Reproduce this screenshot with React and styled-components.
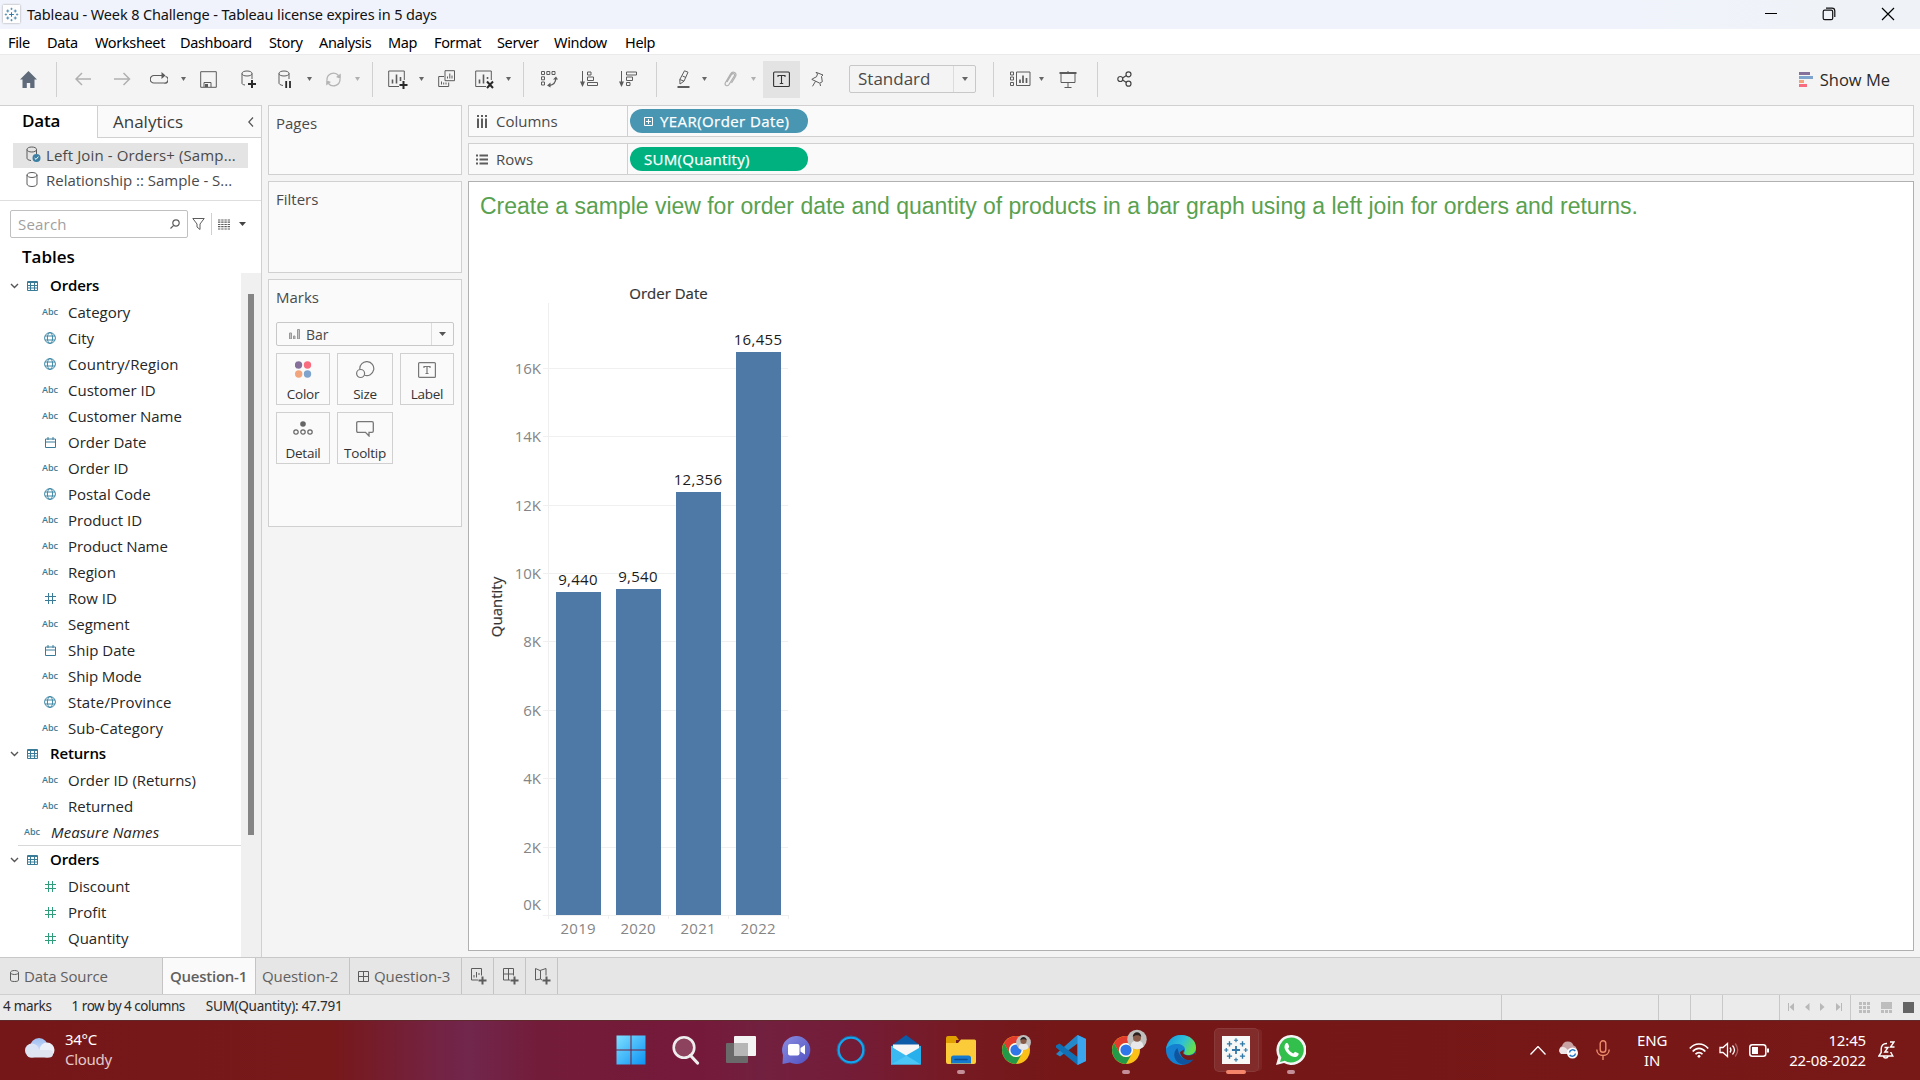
import React from 'react';
import styled, { createGlobalStyle } from 'styled-components';

const UI = '"Open Sans", "Noto Sans", sans-serif';
const SYS = '"Noto Sans", "Open Sans", sans-serif';

const GlobalStyle = createGlobalStyle`
  * { box-sizing: border-box; }
  body { margin: 0; background: #f4f4f4; font-family: ${UI}; overflow: hidden; }
  svg { display: block; flex: none; }
`;

const Window = styled.div`
  width: 1920px;
  height: 1080px;
  display: flex;
  flex-direction: column;
  background: #f4f4f4;
  color: #333;
  white-space: nowrap;
`;

/* ---------- title bar + menu ---------- */
const TitleBar = styled.header`
  height: 29px;
  flex: none;
  display: flex;
  align-items: center;
  padding: 0 0 1px 3px;
  background: linear-gradient(90deg, #f0f3fb 85%, #eff3f8 95%);
  color: #111;
  font: 14.5px/20px ${SYS};
  letter-spacing: -0.14px;
`;
const AppBadge = styled.span`
  width: 17px;
  height: 18px;
  margin-right: 7px;
  display: grid;
  place-items: center;
  background: #fdfdfd;
  box-shadow: 0 0 2px #999;
`;
const WindowControls = styled.div`
  margin-left: auto;
  display: flex;
  gap: 45px;
  padding-right: 25px;
`;
const MenuBar = styled.nav`
  height: 25px;
  flex: none;
  display: flex;
  align-items: center;
  padding: 1px 0 0 8px;
  background: #fff;
  color: #000;
  font: 14.5px/22px ${SYS};
  letter-spacing: -0.35px;
`;
const MenuItem = styled.span`
  width: ${(p) => p.$w}px;
`;

/* ---------- toolbar ---------- */
const Toolbar = styled.div`
  height: 51px;
  flex: none;
  display: flex;
  align-items: center;
  padding-bottom: 2px;
  border-top: 1px solid #eaeaea;
`;
const Tool = styled.span`
  width: ${(p) => p.$w}px;
  margin-left: ${(p) => p.$gap}px;
  height: 37px;
  flex: none;
  display: flex;
  align-items: center;
  justify-content: center;
  background: ${(p) => (p.$active ? '#e3e3e3' : 'transparent')};
`;
const Separator = styled.span`
  width: 1px;
  height: 35px;
  margin-left: ${(p) => p.$gap}px;
  background: #d0d0d0;
`;
const FitSelect = styled.div`
  width: 127px;
  height: 28px;
  margin-left: 24px;
  display: flex;
  align-items: center;
  border: 1px solid #c8c8c8;
  border-radius: 2px;
  padding-left: 8px;
  font-size: 17px;
  line-height: 22px;
  color: #4a4a4a;
`;
const SelectArrow = styled.span`
  width: ${(p) => p.$w}px;
  height: 100%;
  margin-left: auto;
  border-left: 1px solid #dcdcdc;
  display: grid;
  place-items: center;
`;
const ShowMe = styled.div`
  margin-left: auto;
  padding-right: 30px;
  display: flex;
  align-items: center;
  gap: 7px;
  color: #2a2a2a;
  font-size: 16.5px;
`;

/* ---------- body ---------- */
const Body = styled.main`
  height: 852px;
  flex: none;
  display: flex;
  gap: 6px;
`;
const SidePane = styled.aside`
  width: 262px;
  flex: none;
  display: flex;
  flex-direction: column;
  background: #fff;
  border-right: 1px solid #d0d0d0;
`;
const PaneTabs = styled.div`
  height: 33px;
  display: flex;
  flex: none;
  border-top: 1px solid #d0d0d0;
`;
const DataTab = styled.div`
  width: 97px;
  padding-left: 22px;
  font: 600 17px/30px ${UI};
  letter-spacing: -0.2px;
  color: #000;
`;
const AnalyticsTab = styled.div`
  flex: 1;
  display: flex;
  align-items: center;
  justify-content: space-between;
  padding: 0 7px 0 15px;
  background: #fafafa;
  border-left: 1px solid #d0d0d0;
  border-bottom: 1px solid #d0d0d0;
  font-size: 17px;
  color: #3a3a3a;
`;
const Sources = styled.div`
  height: 63px;
  flex: none;
  padding: 5px 13px 0 13px;
  border-bottom: 1px solid #dedede;
`;
const Source = styled.div`
  height: 25px;
  display: flex;
  align-items: center;
  gap: 4px;
  padding: 0 0 2px 13px;
  background: ${(p) => (p.$selected ? '#e4e4e4' : 'transparent')};
  font-size: 15px;
  letter-spacing: ${(p) => (p.$selected ? 0.13 : -0.02)}px;
  color: #4a4a4a;
`;
const SearchRow = styled.div`
  height: 46px;
  flex: none;
  display: flex;
  align-items: center;
  padding-left: 10px;
`;
const SearchBox = styled.div`
  width: 178px;
  height: 28px;
  display: flex;
  align-items: center;
  justify-content: space-between;
  padding: 0 7px 1px;
  margin-right: 4px;
  border: 1px solid #c0c0c0;
  border-radius: 2px;
  font-size: 15px;
  letter-spacing: 0.2px;
  color: #a0a0a0;
`;
const SearchDivider = styled.span`
  width: 1px;
  height: 22px;
  margin: 0 6px;
  background: #d0d0d0;
`;
const CaretBox = styled.span`
  margin-left: 9px;
`;
const TablesHeading = styled.h2`
  height: 26px;
  flex: none;
  margin: 0;
  padding-left: 22px;
  font: 600 17px/20px ${UI};
  color: #000;
`;
const TreeArea = styled.div`
  flex: 1;
  display: flex;
  min-height: 0;
`;
const Tree = styled.div`
  width: 241px;
  overflow: hidden;
`;
const ScrollTrack = styled.div`
  flex: 1;
  padding: 21px 0 0 7px;
  background: #f0f0f0;
`;
const ScrollThumb = styled.div`
  width: 6px;
  height: 541px;
  background: #858585;
`;
const TableRow = styled.div`
  height: ${(p) => p.$h || 26}px;
  display: flex;
  align-items: center;
  gap: 8px;
  padding-left: 10px;
  color: #000;
  font-size: 15px;
  font-weight: 600;
  letter-spacing: -0.15px;
`;
const TableName = styled.span`
  margin-left: 4px;
  padding-bottom: 2px;
`;
const FieldRow = styled.div`
  height: 26px;
  display: flex;
  align-items: center;
  padding-left: ${(p) => (p.$outer ? 22 : 40)}px;
  font-size: 15px;
  color: #262626;
  font-style: ${(p) => (p.$outer ? 'italic' : 'normal')};
  letter-spacing: ${(p) => p.$ls || 0}px;
`;
const FieldIcon = styled.span`
  width: 20px;
  margin-right: ${(p) => (p.$outer ? 9 : 8)}px;
  display: flex;
  justify-content: center;
  font: 600 9px/12px ${UI};
  letter-spacing: 0;
  color: #3a7c98;
`;
const TreeDivider = styled.div`
  height: 1px;
  margin: 0 0 0 18px;
  background: #d8d8d8;
`;

const CardColumn = styled.div`
  width: 194px;
  flex: none;
  display: flex;
  flex-direction: column;
  gap: 6px;
`;
const Card = styled.section`
  height: ${(p) => p.$h}px;
  padding: 6px 7px;
  background: #fafafa;
  border: 1px solid #d0d0d0;
`;
const CardTitle = styled.div`
  font: 15px/22px ${UI};
  color: #4a4a4a;
`;
const MarkSelect = styled.div`
  height: 24px;
  margin-top: 14px;
  display: flex;
  align-items: center;
  padding-left: 12px;
  gap: 6px;
  border: 1px solid #c8c8c8;
  border-radius: 2px;
  font-size: 14px;
  color: #4a4a4a;
`;
const MarkGrid = styled.div`
  display: grid;
  grid-template-columns: 54px 56px 54px;
  grid-auto-rows: 52px;
  gap: 7px;
  margin-top: 7px;
`;
const MarkButton = styled.div`
  border: 1px solid #d0d0d0;
  display: flex;
  flex-direction: column;
  align-items: center;
  font: 13.5px/18px ${UI};
  letter-spacing: -0.25px;
  color: #333;
`;
const MarkIcon = styled.span`
  height: 31px;
  display: grid;
  place-items: center;
`;

const Canvas = styled.div`
  width: 1446px;
  flex: none;
  display: flex;
  flex-direction: column;
  gap: 6px;
`;
const Shelf = styled.div`
  height: 32px;
  flex: none;
  display: flex;
  border: 1px solid #d0d0d0;
  background: #fafafa;
`;
const ShelfLabel = styled.div`
  width: 159px;
  display: flex;
  align-items: center;
  gap: 8px;
  padding-left: 7px;
  border-right: 1px solid #d0d0d0;
  font-size: 15px;
  color: #4a4a4a;
`;
const Pill = styled.div`
  width: 178px;
  height: 24px;
  margin: 3px 0 0 2px;
  padding-left: 14px;
  display: flex;
  align-items: center;
  gap: 7px;
  border-radius: 12px;
  background: ${(p) => p.$color};
  color: #fff;
  font: 15px/24px ${UI};
  -webkit-text-stroke: 0.25px #fff;
  letter-spacing: ${(p) => p.$ls}px;
`;
const View = styled.section`
  flex: none;
  height: 770px;
  border: 1px solid #b0b0b0;
  background: #fff;
  padding: 10px 11px;
`;
const ViewTitle = styled.h1`
  margin: 0;
  height: 90px;
  font: 23px/28px "Liberation Sans", Arial, sans-serif;
  letter-spacing: -0.015px;
  color: #59a14f;
`;

/* ---------- bottom tabs + status ---------- */
const SheetBar = styled.div`
  height: 38px;
  flex: none;
  display: flex;
  background: #e6e6e6;
  border-top: 1px solid #c8c8c8;
  border-bottom: 1px solid #cfcfcf;
`;
const SheetTab = styled.div`
  width: ${(p) => p.$w}px;
  display: flex;
  align-items: center;
  gap: 5px;
  padding-left: ${(p) => p.$pad}px;
  border-right: 1px solid #c4c4c4;
  background: ${(p) => (p.$active ? '#fafafa' : 'transparent')};
  font-weight: ${(p) => (p.$active ? 600 : 400)};
  font-size: 15px;
  letter-spacing: ${(p) => (p.$active ? -0.25 : -0.1)}px;
  color: #606060;
`;
const StatusBar = styled.div`
  height: 25px;
  flex: none;
  display: flex;
  align-items: center;
  background: #ebebeb;
  color: #2a2a2a;
  font: 13.5px/23px ${SYS};
`;
const StatusText = styled.span`
  margin-left: ${(p) => p.$gap}px;
  padding-bottom: 2px;
  letter-spacing: ${(p) => p.$ls}px;
`;
const StatusCells = styled.div`
  height: 100%;
  margin-left: auto;
  display: flex;
`;
const StatusCell = styled.div`
  width: ${(p) => p.$w}px;
  border-left: 1px solid #c8c8c8;
  display: flex;
  align-items: center;
  justify-content: space-between;
  padding: 0 ${(p) => p.$right || 0}px 1px ${(p) => p.$left || 0}px;
`;

/* ---------- taskbar ---------- */
const Taskbar = styled.footer`
  height: 60px;
  flex: none;
  display: flex;
  border-top: 1px solid #5e2a2c;
  color: #fff;
  font: 15px/20px ${SYS};
  background: linear-gradient(90deg, #751719 0, #771819 330px, #732344 440px, #71264c 470px, #731c39 540px,
    #75193a 700px, #72203f 760px, #741c36 860px, #761a22 960px, #751717 1060px, #781817 100%);
`;
const Weather = styled.div`
  width: 603px;
  padding: 8px 0 0 24px;
  display: flex;
  gap: 10px;
`;
const WeatherText = styled.div`
  color: ${(p) => (p.$dim ? '#e3c8c8' : '#fff')};
  letter-spacing: -0.3px;
`;
const Apps = styled.div`
  width: 716px;
  display: flex;
`;
const AppSlot = styled.div`
  width: 55.05px;
  height: 59px;
  padding-top: 7px;
  display: flex;
  flex-direction: column;
  align-items: center;
`;
const AppTile = styled.div`
  width: 45px;
  height: 44px;
  display: grid;
  place-items: center;
  border-radius: 5px;
  background: ${(p) => (p.$active ? 'rgba(255,255,255,.09)' : 'transparent')};
  box-shadow: ${(p) => (p.$active ? 'inset 0 0 0 1px rgba(255,255,255,.07), 4px 0 0 -1px rgba(255,255,255,.06)' : 'none')};
`;
const RunMark = styled.span`
  width: ${(p) => (p.$active ? 20 : 8)}px;
  height: 4px;
  margin-top: -2px;
  border-radius: 2px;
  background: ${(p) => (p.$active ? '#f4846a' : '#c48f98')};
`;
const Tray = styled.div`
  flex: 1;
  display: flex;
  align-items: center;
  justify-content: flex-end;
  padding: 0 25px 1px 0;
`;
const TrayItem = styled.span`
  margin-right: ${(p) => p.$mr}px;
`;
const TrayText = styled.div`
  margin-right: ${(p) => p.$mr}px;
  text-align: ${(p) => p.$align};
  letter-spacing: -0.15px;
  padding-bottom: 1px;
`;

/* ---------- icons ---------- */
const G = '#5c5c5c';
const Svg = ({ w = 16, h = w, children, c = G, sw = 1 }) => (
  <svg width={w} height={h} viewBox={`0 0 ${w} ${h}`} fill="none" stroke={c} strokeWidth={sw}>{children}</svg>
);
const Caret = ({ c = '#666', w = 6 }) => (
  <Svg w={w} h={4} c="none"><path d={`M0 0H${w}L${w / 2} 4Z`} fill={c} /></Svg>
);
const Cyl = 'M.5 3v9c0 1.400 2.200 2.500 5 2.500s5-1.100 5-2.500V3M.5 3c0-1.400 2.200-2.500 5-2.500s5 1.100 5 2.500-2.200 2.500-5 2.500S.5 4.400.5 3';
const SmallCylinder = () => (
  <Svg w={9} h={13}><path d="M.5 2.500v7.500c0 1 1.500 1.500 4 1.500s4-.5 4-1.500V2.500M.5 2.500c0-1 1.500-2 4-2s4 1 4 2-1.500 2-4 2-4-1-4-2" /></Svg>
);
const Snowflake = ({ size = 16, c = '#2f78a8' }) => {
  const crosses = [[16, 16, 5, 2.2], [8, 8.5, 3.2, 1.7], [24, 8.5, 3.2, 1.7], [8, 23.5, 3.2, 1.7], [24, 23.5, 3.2, 1.7],
    [16, 4, 2.5, 1.4], [16, 28, 2.5, 1.4], [4, 16, 2.5, 1.4], [28, 16, 2.5, 1.4]];
  return (
    <svg width={size} height={size} viewBox="0 0 32 32" fill="none" stroke={c}>
      {crosses.map(([x, y, r, w], i) => <path key={i} strokeWidth={w} d={`M${x - r} ${y}h${2 * r}M${x} ${y - r}v${2 * r}`} />)}
    </svg>
  );
};
const TreeTable = () => (
  <Svg w={11} h={10} c="#3a7c98"><path d="M.5.5h10v9H.5zM0 1.500h11M0 4.500h11M0 7h11M3.500 2v8M7.500 2v8" /></Svg>
);
const Chevron = () => <Svg w={9} h={6} c="#555" sw={1.4}><path d="m1 1 3.500 3.500L8 1" /></Svg>;

const Globe = () => (
  <Svg w={12} c="#3f88a6"><circle cx="6" cy="6" r="5.400" /><ellipse cx="6" cy="6" rx="2.600" ry="5.400" /><path d="M1 4h10M1 8h10" /></Svg>
);
const Calendar = () => (
  <Svg w={11} c="#3a7c98"><path d="M.5 2h10v8.500H.5zM.5 5h10M3 0v3M8 0v3" /></Svg>
);
const Hash = ({ c }) => <Svg w={11} c={c}><path d="M3.500 0v11M7.500 0v11M0 3.500h11M0 7.500h11" /></Svg>;
const fieldIcons = {
  abc: 'Abc',
  geo: <Globe />,
  date: <Calendar />,
  num: <Hash c="#3a7c98" />,
  measure: <Hash c="#2f9c7a" />,
};

const Rot = 'M2 9a6.500 6.500 0 0 1 11.500-4.500M15 8a6.500 6.500 0 0 1-11.500 4.500';
const icons = {
  home: <Svg w={17} h={17} c="none"><path d="M8.500 0 17 8.500h-2.500V17H10.200v-5H6.800v5H2.500V8.500H0Z" fill="#5f6b7a" /></Svg>,
  back: <Svg w={17} h={14} c="#b0b0b0" sw={1.5}><path d="M16 7H1M7 1 1 7l6 6" /></Svg>,
  forward: <Svg w={17} h={14} c="#b0b0b0" sw={1.5}><path d="M0 7h15.500M9.500 1l6 6-6 6" /></Svg>,
  replay: <Svg w={18} h={14} sw={1.2}><path d="M13 3.500H4a3.300 3.300 0 0 0 0 7.500h10a3.300 3.300 0 0 0 1.500-6.500" /><path d="m11.500 0 4 3.500-4 3.500Z" fill={G} stroke="none" /></Svg>,
  save: <Svg w={17}><path d="M.7.7h15.600v15.600H.7zM4 16v-4.500h7V16" /><path d="M5 13h3v3H5z" fill={G} stroke="none" /></Svg>,
  addSource: <Svg w={16} h={18}><path d="M5 15C2 14.500 2 13.800 2 13V3.500M2 3.500C2 2 4 1 7 1s5 1 5 2.500S10 6 7 6 2 5 2 3.500ZM12 3.500V9" /><path d="M12 10v8M8 14h8" stroke="#2a2a2a" strokeWidth="2" /></Svg>,
  pause: <Svg w={14} h={18}><path d="M5 15.500C2 15 1 14 1 13V3.500M1 3.500C1 2 3 1 6 1s5 1 5 2.500S9 6 6 6 1 5 1 3.500ZM11 3.500V9" /><path d="M8.200 11v7M12 11v7" stroke="#2a2a2a" strokeWidth="1.800" /></Svg>,
  refresh: <Svg w={17} c="#b4b4b4" sw={1.3}><path d={Rot} /><path d="M15.800 2.500V8L11 6ZM1.200 14.500V9L6 11Z" fill="#b4b4b4" stroke="none" /></Svg>,
  newSheet: <Svg w={20} h={19}><path d="M11 16.500H.7V1h15.600v9" /><path d="M4.500 13.500v-4M8.500 13.500v-9M12.500 11V7" strokeWidth="1.600" /><path d="M15.500 11v8M11.500 15h8" stroke="#2a2a2a" strokeWidth="2" /></Svg>,
  duplicate: <Svg w={18} h={18}><path d="M7 .7h9.500v10H7zM6 6.500H.7v10h10v-4" /><path d="M9.500 8.500v-2M11.800 8.500v-5M14 8.500v-3M3.500 14.500v-3M5.700 14.500v-2M8 14.500v-2" /></Svg>,
  clear: <Svg w={20} h={19}><path d="M11 16.500H.7V1h15.600v9" /><path d="M4.500 13.500v-4M8.500 13.500v-9M12.500 9V7" strokeWidth="1.600" /><path d="m12 11.500 6 6.500m0-6.500-6 6.500" stroke="#2a2a2a" strokeWidth="2" /></Svg>,
  swap: (
    <Svg w={17} h={18}>
      <path d="M.5 1.500h3v3h-3zM5.800 1.500h3v3h-3zM11 1.500h3v3h-3zM.5 6.800h3v3h-3zM.5 12h3v3h-3z" />
      <path d="M14.800 8c0 4-2.500 7-6.800 7.500" strokeWidth="1.300" />
      <path d="m12 9.500 3-3 2 3ZM9.500 12.500v5L6 15.500Z" fill={G} stroke="none" />
    </Svg>
  ),
  sortAsc: <Svg w={18} h={16}><path d="M2.500 0v14M7.500 1h3.500v3H7.500zM7.500 6h6v3.500h-6zM7.500 11.500h10v3h-10z" /><path d="M0 10.500h5L2.500 16Z" fill={G} stroke="none" /></Svg>,
  sortDesc: <Svg w={18} h={16}><path d="M2.500 0v14M7.500 1h10v3h-10zM7.500 6h6v3.500h-6zM7.500 11.500H11v3H7.500z" /><path d="M0 10.500h5L2.500 16Z" fill={G} stroke="none" /></Svg>,
  highlight: <Svg w={13} h={18}><path d="m7.500.8 3.500 1.400-4 9L3 14l-.2-4.500ZM2.800 9.500l4.200 1.700M5.500 6l3.500 1.500" /><path d="M.5 17h12" strokeWidth="2" /></Svg>,
  clip: <Svg w={14} h={17} c="#b0b0b0" sw={1.2}><path d="M4 11 8.500 3.500c1.500-1.800 3.800-.5 2.800 1.500L6 13.500c-1.800 2.500-4.800.7-3.600-1.800L7.500 3C9.700-.7 14.500 1.800 12.500 5.500L8.500 12" /></Svg>,
  label: <Svg w={17} h={17} c="#333" sw={1.1}><rect x=".6" y="1" width="15.800" height="14.500" rx="1" /><path d="M5 6V4.500h7V6M8.500 4.500v8M6.800 12.500h3.400" /></Svg>,
  pin: <Svg w={14} h={17}><path d="M5 1.300 12 4l-1.500 1.400.8 5.300-2.500 1.500-8-3.800L3 7l2.500-1.200 1-2.800ZM4.500 10.300l-3 5M9 12.500l.5 2.500" /></Svg>,
  cards: <Svg w={21} h={16}><path d="M.5 1h3v3h-3zM.5 6h3v3h-3zM.5 11.500h3v3h-3zM6.500 1h13.500v13.500H6.500z" /><path d="M10 12V8.500M13 12V4.500M16.500 12V7" strokeWidth="1.700" /></Svg>,
  present: <Svg w={18} h={17}><path d="M2 3v8.500h14V3M9 11.500V16M5.500 16.500h7M9 0v1" /><path d="M.5 2h17" strokeWidth="2" /></Svg>,
  share: <Svg w={15} h={16} c="#444" sw={1.2}><circle cx="3.300" cy="8" r="2.500" /><circle cx="11.500" cy="3.300" r="2.500" /><circle cx="11.500" cy="12.700" r="2.500" /><path d="m5.500 7 4-2.500M5.500 9l4 2.500" /></Svg>,
};

const toolbarItems = [
  ['home', 20, 17], ['|', 19], ['back', 18, 17], ['forward', 22, 17], ['replay', 19, 18], ['v', 12], ['save', 14, 17],
  ['addSource', 23, 16], ['pause', 22, 14], ['v', 14], ['refresh', 12, 18], ['v-', 12], ['|', 12], ['newSheet', 15, 20],
  ['v', 10], ['duplicate', 14, 18], ['clear', 19, 20], ['v', 10], ['|', 12], ['swap', 17, 17], ['sortAsc', 22, 18],
  ['sortDesc', 21, 18], ['|', 19], ['highlight', 20, 12], ['v', 12], ['clip', 16, 13], ['v-', 14],
  ['label', 7, 37, true], ['pin', 11, 14], ['fit'], ['|', 17], ['cards', 16, 20], ['v', 8], ['present', 15, 18],
  ['|', 20], ['share', 19, 15],
];

const AppToolbar = () => (
  <Toolbar>
    {toolbarItems.map(([kind, gap, w, active], i) => {
      if (kind === '|') return <Separator key={i} $gap={gap} />;
      if (kind === 'v' || kind === 'v-') return <Tool key={i} $gap={gap} $w={6}><Caret w={5} c={kind === 'v' ? '#666' : '#b0b0b0'} /></Tool>;
      if (kind === 'fit') return <FitSelect key={i}>Standard<SelectArrow $w={22}><Caret /></SelectArrow></FitSelect>;
      return <Tool key={i} $gap={gap} $w={w} $active={active}>{icons[kind]}</Tool>;
    })}
    <ShowMe>
      <Svg w={14} h={15} c="none">
        <path d="M0 0h11v3H0z" fill="#85709b" /><path d="M0 4h14v3H0z" fill="#7ea3cc" />
        <path d="M0 8h5v3H0z" fill="#f2a57c" /><path d="M0 12h8v3H0z" fill="#f96c80" />
      </Svg>
      Show Me
    </ShowMe>
  </Toolbar>
);

/* ---------- data ---------- */
const menus = [['File', 39], ['Data', 48], ['Worksheet', 85], ['Dashboard', 89], ['Story', 50], ['Analysis', 69], ['Map', 46],
  ['Format', 63], ['Server', 57], ['Window', 71], ['Help', 40]];
const orderFields = [['abc', 'Category'], ['geo', 'City'], ['geo', 'Country/Region', 0.1], ['abc', 'Customer ID'], ['abc', 'Customer Name', -0.05],
  ['date', 'Order Date'], ['abc', 'Order ID'], ['geo', 'Postal Code'], ['abc', 'Product ID'], ['abc', 'Product Name', -0.1], ['abc', 'Region'],
  ['num', 'Row ID'], ['abc', 'Segment'], ['date', 'Ship Date'], ['abc', 'Ship Mode', -0.1], ['geo', 'State/Province', 0.15], ['abc', 'Sub-Category', 0.1]];
const returnFields = [['abc', 'Order ID (Returns)'], ['abc', 'Returned']];
const measures = [['measure', 'Discount'], ['measure', 'Profit'], ['measure', 'Quantity']];

const Fields = ({ items }) => items.map(([type, name, ls]) => (
  <FieldRow key={name} $ls={ls}><FieldIcon>{fieldIcons[type]}</FieldIcon>{name}</FieldRow>
));
const TableHead = ({ name, h }) => (
  <TableRow $h={h}><Chevron /><TreeTable /><TableName>{name}</TableName></TableRow>
);

const DataPane = () => (
  <SidePane>
    <PaneTabs>
      <DataTab>Data</DataTab>
      <AnalyticsTab>Analytics<Svg w={6} h={10} c="#555" sw={1.2}><path d="M5 .5.8 5 5 9.500" /></Svg></AnalyticsTab>
    </PaneTabs>
    <Sources>
      <Source $selected>
        <Svg w={16} h={17}>
          <path d="M5 14.500C2 14 1 13.500 1 12V3.500M1 3.500C1 2 3 1 5.800 1s4.700 1 4.700 2.500S8.500 6 5.800 6 1 5 1 3.500ZM10.500 3.500V8" />
          <circle cx="10.500" cy="12" r="4" fill="#3b80a4" stroke="none" /><path d="m8.600 12 1.400 1.400 2.400-2.800" stroke="#fff" />
        </Svg>
        Left Join - Orders+ (Samp...
      </Source>
      <Source><Svg w={16} h={15}><path d={Cyl} transform="translate(.5 0)" /></Svg>Relationship :: Sample - S...</Source>
    </Sources>
    <SearchRow>
      <SearchBox>Search<Svg w={10} sw={1.2}><circle cx="6" cy="4" r="3.200" /><path d="M3.700 6.300.5 9.500" /></Svg></SearchBox>
      <Svg w={13} h={12}><path d="M.8.5h11.400L8 6v5.500L5 9V6Z" /></Svg>
      <SearchDivider />
      <Svg w={12} h={11}><path d="M0 1h12M0 3.200h12M0 5.500h12M0 7.700h12M0 10h12" strokeDasharray="2.400 .8" strokeWidth="1.200" /></Svg>
      <CaretBox><Caret w={7} c="#444" /></CaretBox>
    </SearchRow>
    <TablesHeading>Tables</TablesHeading>
    <TreeArea>
      <Tree>
        <TableHead name="Orders" />
        <Fields items={orderFields} />
        <TableHead name="Returns" />
        <Fields items={returnFields} />
        <FieldRow $outer $ls={0.1}><FieldIcon $outer>Abc</FieldIcon>Measure Names</FieldRow>
        <TreeDivider />
        <TableHead name="Orders" h={27} />
        <Fields items={measures} />
      </Tree>
      <ScrollTrack><ScrollThumb /></ScrollTrack>
    </TreeArea>
  </SidePane>
);

const markButtons = [
  ['Color', <Svg w={17} c="none"><circle cx="3.500" cy="4" r="3.700" fill="#85709b" /><circle cx="12.500" cy="4" r="3.700" fill="#f96c80" /><circle cx="3.700" cy="13" r="3.700" fill="#f2a57c" /><circle cx="12.500" cy="13" r="3.700" fill="#7ea3cc" /></Svg>],
  ['Size', <Svg w={19} h={18} c="#777" sw={1.2}><path d="M3.800 8A7 7 0 1 1 8.500 14.200" /><circle cx="4.600" cy="12.500" r="4" /></Svg>],
  ['Label', <Svg w={18} h={16} c="#777" sw={1.2}><rect x=".6" y=".6" width="16.800" height="14.800" rx="1" /><path d="M6 6V4.500h6V6M9 4.500v7M7.500 11.500h3" /></Svg>],
  ['Detail', <Svg w={20} h={15} c="#666" sw={1.2}><circle cx="10" cy="3" r="2.800" fill="#666" stroke="none" /><circle cx="3" cy="11" r="2.200" /><circle cx="10" cy="11" r="2.200" /><circle cx="17" cy="11" r="2.200" /></Svg>],
  ['Tooltip', <Svg w={18} h={16} c="#777" sw={1.3}><path d="M2 .7h14q1.300 0 1.300 1.300v8q0 1.300-1.300 1.300h-3V15l-3.500-3.700H2Q.7 11.300.7 10V2Q.7.7 2 .7Z" /></Svg>],
];

const Cards = () => (
  <CardColumn>
    <Card $h={70}><CardTitle>Pages</CardTitle></Card>
    <Card $h={92}><CardTitle>Filters</CardTitle></Card>
    <Card $h={248}>
      <CardTitle>Marks</CardTitle>
      <MarkSelect>
        <Svg w={11} h={10} c="#999"><path d="M.5 4h2v6h-2zM4.500 7h1.500v3H4.500zM8.500 .5h2V10h-2z" fill="#c4c4c4" /></Svg>
        Bar
        <SelectArrow $w={22}><Caret w={7} c="#555" /></SelectArrow>
      </MarkSelect>
      <MarkGrid>
        {markButtons.map(([name, icon]) => <MarkButton key={name}><MarkIcon>{icon}</MarkIcon>{name}</MarkButton>)}
      </MarkGrid>
    </Card>
  </CardColumn>
);

/* ---------- chart ---------- */
const ticks = [0, 2, 4, 6, 8, 10, 12, 14, 16];
const bars = [[2019, 9440], [2020, 9540], [2021, 12356], [2022, 16455]];
const yOf = (v) => 633 - Math.round((v * 34.2) / 1000);
const ChartSvg = styled.svg`
  font: 15px ${UI};
`;
const Chart = () => (
  <ChartSvg width="320" height="660" viewBox="0 0 320 660">
    <text x="188.500" y="17" textAnchor="middle" fill="#333" stroke="#333" strokeWidth=".2">Order Date</text>
    <text transform="translate(22 325) rotate(-90)" textAnchor="middle" fill="#333" stroke="#333" strokeWidth=".2">Quantity</text>
    <path d="M68.500 21V637" stroke="#efefef" />
    {ticks.map((t) => {
      const y = yOf(t * 1000);
      return (
        <g key={t}>
          <path d={`M63 ${y + 0.5}H308`} stroke="#f0f0f0" />
          <text x="61" y={t === 0 ? y - 5 : y + 6} textAnchor="end" fill="#858585">{t}K</text>
        </g>
      );
    })}
    {[128.5, 188.5, 248.5, 308.5].map((x) => <path key={x} d={`M${x} 633V637`} stroke="#efefef" />)}
    {bars.map(([year, value], i) => {
      const x = 76 + i * 60;
      const y = yOf(value);
      return (
        <g key={year}>
          <rect x={x} y={y} width="45" height={633 - y} fill="#4e79a7" />
          <text x={x + 22} y={y - 7} textAnchor="middle" letterSpacing=".3" fill="#1c1c1c">{value.toLocaleString('en-US')}</text>
          <text x={x + 22.2} y="652" textAnchor="middle" letterSpacing=".3" fill="#858585">{year}</text>
        </g>
      );
    })}
  </ChartSvg>
);

const Worksheet = () => (
  <Canvas>
    <Shelf>
      <ShelfLabel><Svg w={12} h={13} c={G}><path d="M2 0v2M6 0v2M10 0v2M2 3.500V13M6 3.500V13M10 3.500V13" strokeWidth="2" /></Svg>Columns</ShelfLabel>
      <Pill $color="#4996b2" $ls={0.42}>
        <Svg w={9} c="#fff"><path d="M.5.5h8v8h-8zM2 4.500h5M4.500 2v5" /></Svg>YEAR(Order Date)
      </Pill>
    </Shelf>
    <Shelf>
      <ShelfLabel><Svg w={12} h={11} c={G}><path d="M0 1.500h2M0 5.500h2M0 9.500h2M3.500 1.500H12M3.500 5.500H12M3.500 9.500H12" strokeWidth="2" /></Svg>Rows</ShelfLabel>
      <Pill $color="#00b180" $ls={0.3}>SUM(Quantity)</Pill>
    </Shelf>
    <View>
      <ViewTitle>Create a sample view for order date and quantity of products in a bar graph using a left join for orders and returns.</ViewTitle>
      <Chart />
    </View>
  </Canvas>
);

const plus = <path d="M11.500 8.500v8M7.500 12.500h8" strokeWidth="2" />;
const Bottom = () => (
  <>
    <SheetBar>
      <SheetTab $w={163} $pad={10}><SmallCylinder />Data Source</SheetTab>
      <SheetTab $w={93} $pad={7} $active>Question-1</SheetTab>
      <SheetTab $w={94} $pad={6}>Question-2</SheetTab>
      <SheetTab $w={112} $pad={8}><Svg w={11}><path d="M.5.5h10v10H.5zM0 5.500h11M5.500 0v11" /></Svg>Question-3</SheetTab>
      <SheetTab $w={32} $pad={9}><Svg w={16} h={17}><path d="M7 12H.5V.5h10v7M3 9.500V7M5.500 9.500V4M8 7V5" />{plus}</Svg></SheetTab>
      <SheetTab $w={32} $pad={9}><Svg w={16} h={17}><path d="M7 12H.5V.5h10v7M.5 6h10M5.500 .5V12" />{plus}</Svg></SheetTab>
      <SheetTab $w={32} $pad={9}><Svg w={16} h={17}><path d="M7 12 5.500 11 .5 12V.5L5 2.500l6-2V7.500M5.500 2.500v8.500" />{plus}</Svg></SheetTab>
    </SheetBar>
    <StatusBar>
      <StatusText $gap={3} $ls={-0.3}>4 marks</StatusText>
      <StatusText $gap={20} $ls={-0.5}>1 row by 4 columns</StatusText>
      <StatusText $gap={21} $ls={-0.25}>SUM(Quantity): 47.791</StatusText>
      <StatusCells>
        <StatusCell $w={157} /><StatusCell $w={32} /><StatusCell $w={32} /><StatusCell $w={57} />
        <StatusCell $w={71} $left={8} $right={8}>
          <Svg w={6} h={8} c="none"><path d="M0 0h1v8H0zM6 0v8L1.500 4z" fill="#b8b8b8" /></Svg>
          <Svg w={5} h={8} c="none"><path d="M4.500 0v8L0 4z" fill="#b8b8b8" /></Svg>
          <Svg w={5} h={8} c="none"><path d="M0 0v8l4.500-4z" fill="#b8b8b8" /></Svg>
          <Svg w={6} h={8} c="none"><path d="M5 0h1v8H5zM0 0v8l4.500-4z" fill="#b8b8b8" /></Svg>
        </StatusCell>
        <StatusCell $w={70} $left={8} $right={6}>
          <Svg w={11} c="none"><path d="M0 0h3v3H0zM4 0h3v3H4zM8 0h3v3H8zM0 4h3v3H0zM4 4h3v3H4zM8 4h3v3H8zM0 8h3v3H0zM4 8h3v3H4zM8 8h3v3H8z" fill="#bdbdbd" /></Svg>
          <Svg w={11} c="none"><path d="M0 0h11v7H0zM0 8h3v3H0zM4 8h3v3H4zM8 8h3v3H8z" fill="#bdbdbd" /></Svg>
          <Svg w={11} c="none"><path d="M0 0h11v11H0z" fill="#646464" /></Svg>
        </StatusCell>
      </StatusCells>
    </StatusBar>
  </>
);

/* ---------- taskbar icons ---------- */
const Art = ({ children, size = 30 }) => <svg width={size} height={size} viewBox="0 0 30 30" fill="none">{children}</svg>;
const ChromeArt = ({ big }) => (
  <svg width="32" height="34" viewBox="0 0 32 34" fill="none" overflow="visible">
    <circle cx="16" cy="17" r="14" fill="#fbc116" />
    <path d="M3.900 10A14 14 0 0 1 28.100 10H16a7 7 0 0 0-6.100 10.500Z" fill="#e33b2e" />
    <path d="M3.900 10A14 14 0 0 0 16 31l6.100-10.500A7 7 0 0 1 9.900 20.500Z" fill="#229a4a" />
    <circle cx="16" cy="17" r="7" fill="#fff" /><circle cx="16" cy="17" r="5.600" fill="#2f76e8" />
    <g transform={big ? 'translate(27 6.500) scale(1.250)' : 'translate(23.500 9.500) scale(.95)'}>
      <circle r="7.800" fill="#bfc0bd" /><path d="M-5 6c0-4 2-5 5-5s5 1 5 5a7.800 7.800 0 0 1-10 0Z" fill="#e8e8ea" />
      <circle cy="-1.500" r="3.200" fill="#8a5a48" /><path d="M-3.400-2c0-5 6.800-5 6.800 0-1.500-1.800-5-2-6.800 0Z" fill="#2b211f" />
    </g>
  </svg>
);
const apps = [
  [<Art><defs><linearGradient id="win" x1="0" y1="0" x2="1" y2="1"><stop stopColor="#7fe0ff" /><stop offset="1" stopColor="#0c92f4" /></linearGradient></defs><path d="M.5.500h14v14H.5zM15.500.500h14v14h-14zM.5 15.500h14v14H.5zM15.500 15.500h14v14h-14z" fill="url(#win)" /></Art>],
  [<Art><circle cx="13" cy="12.500" r="10.300" fill="rgba(255,255,255,.18)" stroke="#eee" strokeWidth="2.600" /><path d="m19.500 20.500 7 7.500" stroke="#eee" strokeWidth="3.200" strokeLinecap="round" /></Art>],
  [<Art><rect x="0" y="8" width="22" height="20" rx="1" fill="#6a6a6a" /><rect x="8" y="1" width="22" height="20" rx="1" fill="#f4f4f4" /><path d="M8 8h14v13H8z" fill="#b6b6b6" /></Art>],
  [<Art><defs><linearGradient id="chat" x1="0" y1="0" x2="1" y2="1"><stop stopColor="#8b8ee2" /><stop offset="1" stopColor="#4f4fc0" /></linearGradient></defs><path d="M15 1a14 14 0 1 1-6 26.500L1.500 29 2 20A14 14 0 0 1 15 1Z" fill="url(#chat)" /><rect x="7" y="9" width="11.500" height="11.500" rx="2" fill="#fff" /><path d="m19.500 13 4.500-3v9.500l-4.500-3Z" fill="#fff" /></Art>],
  [<Art><circle cx="15" cy="15" r="12.500" stroke="#12a6f0" strokeWidth="2.600" /><circle cx="15" cy="15" r="14" stroke="#2b5f96" strokeWidth="1" /></Art>],
  [<Art><path d="M0 11 15 0l15 11v3H0Z" fill="#0b5ba8" /><path d="M0 11h30v18.500H0Z" fill="#28b0ec" /><path d="M0 11 30 29.500H0Z" fill="#4bc6f6" /><path d="M2 9.500h26V13L15 20.500 2 13Z" fill="#f6f6f6" /><path d="M0 11.500 15 21l-15 8.500Z" fill="#3abaf0" /></Art>],
  [<Art><path d="M0 3q0-2 2-2h8l3 4h-3v5H0Z" fill="#e0a000" /><path d="M0 8h12l3-3.500h13.500Q30 4.500 30 6v21q0 2-2 2H2q-2 0-2-2Z" fill="#fccb3a" /><path d="M5 28.500V23q0-2.500 2.500-2.500h15Q25 20.500 25 23v5.500Z" fill="#147ad0" /><path d="M9 24.500h12" stroke="#0a4e90" strokeWidth="1.600" strokeLinecap="round" /></Art>, 'dot'],
  [<ChromeArt />],
  [<Art><path d="M21.500 0 30 4v22l-8.500 4V8.500L4 21.500 0 19l19-17Z" fill="#2489ca" /><path d="M0 10.500 3.500 8.500 21.500 22v8L0 12.500Z" fill="#1070b3" /><path d="M21.500 0 30 4v22l-8.500 4Z" fill="#3ba6ef" /></Art>],
  [<ChromeArt big />, 'dot'],
  [<Art><defs><linearGradient id="edge" x1="0" y1="0" x2="1" y2=".4"><stop stopColor="#1795dc" /><stop offset=".6" stopColor="#2fc0d8" /><stop offset="1" stopColor="#62dd54" /></linearGradient></defs><circle cx="15" cy="15" r="15" fill="#1580cf" /><path d="M0 14.500C1 6 7 0 15 0c9 0 15 5.500 15 12.500 0 5-3.500 7.500-8 7.500-3 0-4-1.200-4-2 0-.8 1-1.300 1-3.500C19 11 15 9 11 9 6 9 2 11 0 14.500Z" fill="url(#edge)" /><path d="M11.500 13c-6 5-3 15 5 16.500 5 .5 9.500-2.500 11.500-6-7 3-15 .5-16.500-10.500Z" fill="#0f549e" /><path d="M18 14.500c0 2-1 2.700-1 3.500s2 2.500 5.500 2.500c3 0 6-1.500 7.200-4L29 24c-9 3.500-14.500-2-15-7Z" fill="#761818" /></Art>],
  [<Art><path d="M1 1h28v28H1z" fill="#f8f8f6" /><svg x="2" y="2" width="26" height="26"><Snowflake size={26} /></svg></Art>, 'active'],
  [<Art><path d="M15 0a15 15 0 1 1-7 28L0 30l2.200-7.800A15 15 0 0 1 15 0Z" fill="#f4f4f4" /><path d="M15.200 2.500a12.500 12.500 0 1 1-6.400 23.200L4 27l1.400-4.600A12.500 12.500 0 0 1 15.200 2.500Z" fill="#33bf4c" /><path d="M9 9.500c1-2 2.600-2 3.200-.5l1 2.500c.2.700-1.200 1.700-1 2.300 1 2.200 2.700 3.700 5 4.600.8.200 1.500-1.800 2.300-1.500l2.800 1.300c1 .6-.3 3.500-2.800 3.800-4 .5-10.500-5-11-9.500 0-1 0-2 .5-3Z" fill="#fff" /></Art>, 'dot'],
];

const AppTaskbar = () => (
  <Taskbar>
    <Weather>
      <svg width="31" height="40" viewBox="0 0 31 40">
        <defs><linearGradient id="cl" x1="0" y1="0" x2="0" y2="1"><stop stopColor="#9dbdf0" /><stop offset="1" stopColor="#dfe9fb" /></linearGradient></defs>
        <circle cx="15" cy="18" r="9" fill="url(#cl)" /><circle cx="8" cy="21.500" r="7" fill="#dbe4f5" />
        <circle cx="23" cy="21" r="7.500" fill="#eaeff8" /><rect x="3" y="21" width="26" height="7.500" rx="3.700" fill="#dfe6f2" />
      </svg>
      <div><WeatherText>34°C</WeatherText><WeatherText $dim>Cloudy</WeatherText></div>
    </Weather>
    <Apps>
      {apps.map(([icon, state], i) => (
        <AppSlot key={i}>
          <AppTile $active={state === 'active'}>{icon}</AppTile>
          {state && <RunMark $active={state === 'active'} />}
        </AppSlot>
      ))}
    </Apps>
    <Tray>
      <TrayItem $mr={12}><Svg w={16} h={9} c="#fff" sw={1.3}><path d="m.5 8.500 7.500-8 7.500 8" /></Svg></TrayItem>
      <TrayItem $mr={18}>
        <Svg w={20} h={18} c="none">
          <path d="M4 12.500a4 4 0 0 1 0-7.500 6 6 0 0 1 11.500-.5 4 4 0 0 1 1 7.500Z" fill="#c9a2a4" /><path d="M3 13a3.800 3.800 0 0 1 1-7c3 0 5 1 8 6v1Z" fill="#efe4e5" />
          <circle cx="14.500" cy="12" r="5.500" fill="#fff" /><path d="M11.500 11.500a3.200 3.200 0 0 1 5.800-1.300M17.500 12.500a3.200 3.200 0 0 1-5.800 1.300" stroke="#1f74c4" strokeWidth="1.500" />
        </Svg>
      </TrayItem>
      <TrayItem $mr={27}><Svg w={14} h={20} c="#ee8c6c" sw={1.4}><rect x="4.200" y=".8" width="5.600" height="11.500" rx="2.800" /><path d="M.8 9.500c0 8 12.400 8 12.400 0M7 15.500V20" /></Svg></TrayItem>
      <TrayText $mr={22} $align="center">ENG<br />IN</TrayText>
      <TrayItem $mr={10}><Svg w={20} h={15} c="#fff" sw={1.7}><path d="M.8 5.500c5-6 13.400-6 18.400 0M3.700 8.500c3.500-4.300 9.100-4.300 12.600 0M6.500 11.300c2-2.300 5-2.300 7 0" /><circle cx="10" cy="13.300" r="1.400" fill="#fff" stroke="none" /></Svg></TrayItem>
      <TrayItem $mr={10}><Svg w={20} h={16} c="#fff" sw={1.3}><path d="M1 5.500h3L8.500 1.500v13L4 10.500H1ZM11 5.500q2 2.500 0 5M13.500 3.500q4 4.500 0 9" /><path d="M16.200 1.500q5 6.500 0 13" stroke="#a76163" /></Svg></TrayItem>
      <TrayItem $mr={20}><Svg w={20} h={13} c="#fff" sw={1.5}><rect x=".8" y=".8" width="16" height="11.400" rx="2.500" /><path d="M3 3h6v7H3zM18 4.500h2v4h-2z" fill="#fff" stroke="none" /></Svg></TrayItem>
      <TrayText $mr={12} $align="right">12:45<br />22-08-2022</TrayText>
      <Svg w={17} h={18} c="#fff" sw={1.4}><path d="M9 2.500C5 2.300 3.200 5 3.200 8v3.500L.8 15h14l-1.900-3.500V11M5.500 15.500c.5 2 4 2 4.500 0M6.500 6.500h3.500L6.800 11h3.500M12 1h4l-3.500 5H16.500" /></Svg>
    </Tray>
  </Taskbar>
);

export default function App() {
  return (
    <Window>
      <GlobalStyle />
      <TitleBar>
        <AppBadge><Snowflake size={15} /></AppBadge>
        Tableau - Week 8 Challenge - Tableau license expires in 5 days
        <WindowControls>
          <Svg w={14} h={14} c="#000"><path d="M2 6.500h12" /></Svg>
          <Svg w={14} h={14} c="#111" sw={1.2}><rect x="1.200" y="3.200" width="9.500" height="9.500" rx="1.500" /><path d="M4 1.200h6q2.800 0 2.800 2.800v6" /></Svg>
          <Svg w={14} h={14} c="#000" sw={1.2}><path d="m1 1 12 12M13 1 1 13" /></Svg>
        </WindowControls>
      </TitleBar>
      <MenuBar>{menus.map(([name, w]) => <MenuItem key={name} $w={w}>{name}</MenuItem>)}</MenuBar>
      <AppToolbar />
      <Body>
        <DataPane />
        <Cards />
        <Worksheet />
      </Body>
      <Bottom />
      <AppTaskbar />
    </Window>
  );
}
